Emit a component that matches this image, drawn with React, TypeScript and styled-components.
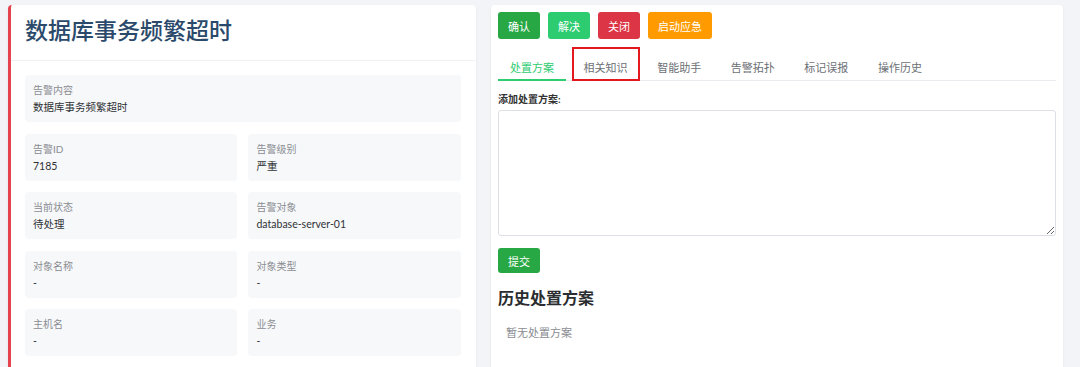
import * as React from "react";
import styled, { createGlobalStyle } from "styled-components";

const GlobalStyle = createGlobalStyle`
  html, body {
    margin: 0;
    padding: 0;
    overflow: hidden;
    background: #f3f4f8;
    font-family: Lato, "Noto Sans CJK SC", sans-serif;
  }
  * { box-sizing: border-box; }
`;

const Page = styled.div`
  display: grid;
  grid-template-columns: 45fr 55fr;
  gap: 15px;
  padding: 5px 17px 0 8px;
  min-height: 420px;
`;

const Card = styled.div<{ $accent?: string }>`
  background: #fff;
  border-radius: 4px;
  box-shadow: 0 1px 3px rgba(0, 0, 0, 0.06);
  border-left: ${(p) => (p.$accent ? `3px solid ${p.$accent}` : "none")};
`;

const Header = styled.div`
  padding: 9px 14px 14px;
  border-bottom: 1px solid #f0f1f3;
`;

const Title = styled.h1`
  margin: 0;
  font-size: 23px;
  line-height: 32px;
  font-weight: 500;
  color: #2b4a6b;
`;

const InfoBody = styled.div`
  padding: 14px 15px 20px 14px;
  display: grid;
  grid-template-columns: 1fr 1fr;
  column-gap: 11px;
  row-gap: 11.5px;
`;

const InfoBox = styled.div<{ $wide?: boolean }>`
  grid-column: ${(p) => (p.$wide ? "1 / span 2" : "auto")};
  background: #f7f8fa;
  border-radius: 4px;
  padding: 8px 8px 7px;
  height: 47px;
`;

const InfoLabel = styled.div`
  font-size: 10px;
  line-height: 15px;
  color: #8a8d92;
`;

const InfoValue = styled.div`
  font-size: 10.5px;
  line-height: 15px;
  margin-top: 2px;
  color: #2f3235;
`;

const ActionPanel = styled.div`
  padding: 7px;
`;

const ButtonRow = styled.div<{ $top?: number }>`
  display: flex;
  gap: 8px;
  margin-top: ${(p) => p.$top ?? 0}px;
`;

const ActionButton = styled.button<{ $color: string; $h?: number }>`
  height: ${(p) => p.$h ?? 27}px;
  padding: 0 10px;
  border: none;
  border-radius: 3px;
  background: ${(p) => p.$color};
  color: #fff;
  font-family: inherit;
  font-size: 11px;
`;

const TabBar = styled.div`
  display: flex;
  gap: 5.6px;
  margin-top: 8px;
  border-bottom: 1px solid #eaecef;
`;

const Tab = styled.div<{ $active?: boolean; $marked?: boolean }>`
  padding: 14px 12px 5px;
  font-size: 11px;
  line-height: 13px;
  margin-bottom: -1px;
  color: ${(p) => (p.$active ? "#2ecc71" : "#6c7075")};
  border-bottom: 2px solid ${(p) => (p.$active ? "#2ecc71" : "transparent")};
  outline: ${(p) => (p.$marked ? "2px solid #e3191f" : "none")};
  outline-offset: -2px;
`;

const FieldLabel = styled.div`
  margin-top: 12px;
  font-size: 10px;
  font-weight: 700;
  color: #333;
  line-height: 12px;
`;

const TextArea = styled.textarea`
  display: block;
  width: 100%;
  height: 126px;
  margin-top: 5px;
  border: 1px solid #dcdfe3;
  border-radius: 3px;
  resize: vertical;
`;

const SectionTitle = styled.h2`
  margin: 15px 0 0;
  font-size: 16px;
  line-height: 20px;
  font-weight: 700;
  color: #2a2c2f;
`;

const EmptyNote = styled.div`
  margin-top: 17px;
  padding-left: 8px;
  font-size: 11px;
  line-height: 15px;
  color: #8a8d92;
`;

const fields: [string, string][] = [
  ["告警ID", "7185"],
  ["告警级别", "严重"],
  ["当前状态", "待处理"],
  ["告警对象", "database-server-01"],
  ["对象名称", "-"],
  ["对象类型", "-"],
  ["主机名", "-"],
  ["业务", "-"],
  ["告警时间", "-"],
  ["持续时间", "-"],
];

const tabs = ["处置方案", "相关知识", "智能助手", "告警拓扑", "标记误报", "操作历史"];

export default function App() {
  return (
    <>
      <GlobalStyle />
      <Page>
        <Card $accent="#e5434f">
          <Header>
            <Title>数据库事务频繁超时</Title>
          </Header>
          <InfoBody>
            <InfoBox $wide>
              <InfoLabel>告警内容</InfoLabel>
              <InfoValue>数据库事务频繁超时</InfoValue>
            </InfoBox>
            {fields.map(([label, value]) => (
              <InfoBox key={label}>
                <InfoLabel>{label}</InfoLabel>
                <InfoValue>{value}</InfoValue>
              </InfoBox>
            ))}
          </InfoBody>
        </Card>
        <Card>
          <ActionPanel>
            <ButtonRow>
              <ActionButton $color="#28a745">确认</ActionButton>
              <ActionButton $color="#2ecc71">解决</ActionButton>
              <ActionButton $color="#dc3545">关闭</ActionButton>
              <ActionButton $color="#ff9b00">启动应急</ActionButton>
            </ButtonRow>
            <TabBar>
              {tabs.map((t, i) => (
                <Tab key={t} $active={i === 0} $marked={i === 1}>
                  {t}
                </Tab>
              ))}
            </TabBar>
            <FieldLabel>添加处置方案:</FieldLabel>
            <TextArea />
            <ButtonRow $top={12}>
              <ActionButton $color="#28a745" $h={25}>提交</ActionButton>
            </ButtonRow>
            <SectionTitle>历史处置方案</SectionTitle>
            <EmptyNote>暂无处置方案</EmptyNote>
          </ActionPanel>
        </Card>
      </Page>
    </>
  );
}
